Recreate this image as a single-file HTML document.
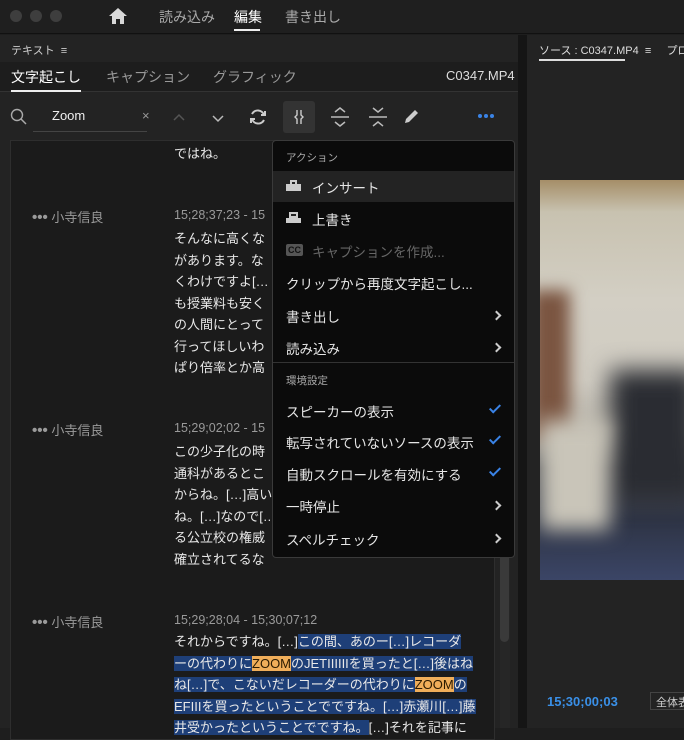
<!DOCTYPE html>
<html><head><meta charset="utf-8"><style>
*{margin:0;padding:0;box-sizing:border-box}
body{width:684px;height:728px;background:#1e1e1e;font-family:"Liberation Sans","Noto Sans CJK JP",sans-serif;color:#ddd;position:relative;overflow:hidden}
.a{position:absolute;white-space:nowrap}
.dot{position:absolute;top:10px;width:12px;height:12px;border-radius:50%;background:#3e3e3e}
.tl{font-size:13px;color:#e8e8e8}
.g{color:#9a9a9a}
.hl{background:#1e3f78}
.zm{background:#f0ae5a;color:#2b1a00}
.mi{position:absolute;left:286px;font-size:13.5px;color:#e6e6e6}
.chev{position:absolute;left:493px;width:7px;height:7px;border-top:2px solid #ccc;border-right:2px solid #ccc;transform:rotate(45deg)}
.chk{position:absolute;left:492px;width:6px;height:11px;border-bottom:2px solid #3a83e6;border-right:2px solid #3a83e6;transform:rotate(45deg)}
</style></head><body>
<div class="a" style="left:0;top:0;width:684px;height:34px;background:#1f1f1f;border-bottom:1px solid #111"></div>
<div class="dot" style="left:10px"></div><div class="dot" style="left:30px"></div><div class="dot" style="left:50px"></div>
<svg class="a" style="left:108px;top:7px" width="20" height="18" viewBox="0 0 20 18"><path d="M10 1L1 9h3v8h4v-5h4v5h4V9h3z" fill="#d8d8d8"/></svg>
<div class="a" style="left:159px;top:7px;font-size:14px;color:#aaa">読み込み</div>
<div class="a" style="left:234px;top:7px;font-size:14px;color:#fff">編集</div>
<div class="a" style="left:234px;top:29px;width:26px;height:2px;background:#eee"></div>
<div class="a" style="left:285px;top:7px;font-size:14px;color:#aaa">書き出し</div>
<div class="a" style="left:0;top:35px;width:518px;height:693px;background:#232323"></div>
<div class="a" style="left:11px;top:42px;font-size:11px;color:#ccc">テキスト&nbsp;&nbsp;≡</div>
<div class="a" style="left:0;top:62px;width:518px;height:30px;background:#1d1d1d;border-bottom:1px solid #333"></div>
<div class="a" style="left:11px;top:67px;font-size:14px;color:#fff">文字起こし</div>
<div class="a" style="left:11px;top:90px;width:70px;height:2px;background:#eee"></div>
<div class="a" style="left:106px;top:67px;font-size:14px;color:#999">キャプション</div>
<div class="a" style="left:213px;top:67px;font-size:14px;color:#999">グラフィック</div>
<div class="a" style="left:446px;top:68px;font-size:13px;color:#ddd">C0347.MP4</div>
<svg class="a" style="left:10px;top:108px" width="18" height="18"><circle cx="7" cy="7" r="5.5" stroke="#aaa" stroke-width="1.4" fill="none"/><path d="M11 11l5 5" stroke="#aaa" stroke-width="1.5"/></svg>
<div class="a" style="left:52px;top:108px;font-size:13px;color:#eee">Zoom</div>
<div class="a" style="left:142px;top:108px;font-size:13px;color:#999">×</div>
<div class="a" style="left:33px;top:131px;width:114px;height:1px;background:#444"></div>
<svg class="a" style="left:170px;top:110px" width="150" height="16"><path d="M4 10l5-5 5 5" stroke="#555" stroke-width="1.5" fill="none"/><path d="M43 6l5 5 5-5" stroke="#bbb" stroke-width="1.5" fill="none"/></svg>
<svg class="a" style="left:248px;top:107px" width="20" height="20" viewBox="0 0 20 20"><path d="M16 8A6.5 6.5 0 0 0 4 7M4 12a6.5 6.5 0 0 0 12 1" stroke="#ccc" stroke-width="2" fill="none"/><path d="M13 8h4V4M7 12H3v4" stroke="#ccc" stroke-width="2" fill="none"/></svg>
<div class="a" style="left:283px;top:101px;width:32px;height:32px;background:#333;border-radius:3px"></div>
<svg class="a" style="left:291px;top:108px" width="16" height="18"><path d="M6 2v5l-2 2 2 2v5M10 2v5l2 2-2 2v5" stroke="#ccc" stroke-width="1.4" fill="none"/></svg>
<svg class="a" style="left:330px;top:106px" width="20" height="22"><path d="M5 6l5-4 5 4M1 11h18M5 16l5 4 5-4" stroke="#bbb" stroke-width="1.5" fill="none"/></svg>
<svg class="a" style="left:368px;top:106px" width="20" height="22"><path d="M5 2l5 4 5-4M1 11h18M5 20l5-4 5 4" stroke="#bbb" stroke-width="1.5" fill="none"/></svg>
<svg class="a" style="left:402px;top:108px" width="18" height="18"><path d="M3 15l1-4 9-9 3 3-9 9z" fill="#ccc"/></svg>
<svg class="a" style="left:477px;top:113px" width="20" height="6"><circle cx="3" cy="3" r="2" fill="#3a83e6"/><circle cx="9" cy="3" r="2" fill="#3a83e6"/><circle cx="15" cy="3" r="2" fill="#3a83e6"/></svg>
<div class="a" style="left:10px;top:140px;width:485px;height:600px;background:#1b1b1b;border:1px solid #2e2e2e"></div>
<div class="a" style="left:500px;top:140px;width:10px;height:588px;background:#262626"></div>
<div class="a" style="left:500px;top:510px;width:9px;height:132px;background:#3a3a3a;border-radius:5px"></div>
<div class="a tl" style="left:174px;top:143px">ではね。</div>
<div class="a g" style="left:32px;top:207px;font-size:13px"><b style="font-size:15px">•••</b>&nbsp;小寺信良</div>
<div class="a g" style="left:174px;top:208px;font-size:12.5px">15;28;37;23 - 15</div>
<div class="a tl" style="left:174px;top:228px;line-height:21.5px">そんなに高くな<br>があります。な<br>くわけですよ[…<br>も授業料も安く<br>の人間にとって<br>行ってほしいわ<br>ぱり倍率とか高</div>
<div class="a g" style="left:32px;top:420px;font-size:13px"><b style="font-size:15px">•••</b>&nbsp;小寺信良</div>
<div class="a g" style="left:174px;top:421px;font-size:12.5px">15;29;02;02 - 15</div>
<div class="a tl" style="left:174px;top:441px;line-height:21.5px">この少子化の時<br>通科があるとこ<br>からね。[…]高い<br>ね。[…]なので[…<br>る公立校の権威<br>確立されてるな</div>
<div class="a g" style="left:32px;top:612px;font-size:13px"><b style="font-size:15px">•••</b>&nbsp;小寺信良</div>
<div class="a g" style="left:174px;top:613px;font-size:12.5px">15;29;28;04 - 15;30;07;12</div>
<div class="a tl" style="left:174px;top:631px;line-height:21.5px">それからですね。[…]<span class="hl">この間、あのー[…]レコーダ</span><br><span class="hl">ーの代わりに<span class="zm">ZOOM</span>のJETIIIIIIを買ったと[…]後はね</span><br><span class="hl">ね[…]で、こないだレコーダーの代わりに<span class="zm">ZOOM</span>の</span><br><span class="hl">EFIIIを買ったということでですね。[…]赤瀬川[…]藤</span><br><span class="hl">井受かったということでですね。</span>[…]それを記事に</div>
<div class="a" style="left:518px;top:35px;width:9px;height:693px;background:#151515"></div>
<div class="a" style="left:527px;top:35px;width:157px;height:693px;background:#232323"></div>
<div class="a" style="left:539px;top:42px;font-size:11px;color:#ddd">ソース : C0347.MP4&nbsp;&nbsp;≡&nbsp;&nbsp;&nbsp;&nbsp;&nbsp;プロ</div>
<div class="a" style="left:539px;top:59px;width:86px;height:2px;background:#ddd"></div>
<div class="a" style="left:540px;top:180px;width:144px;height:400px;overflow:hidden;background:linear-gradient(180deg,#a58e68 0%,#c8c2b0 8%,#d3cfc4 30%,#d0ccc2 50%,#b8b4aa 62%,#4a4b50 72%,#2e3445 85%,#3b4566 100%)">
<div style="position:absolute;left:-10px;top:110px;width:40px;height:150px;background:#7a5440;filter:blur(8px)"></div>
<div style="position:absolute;left:70px;top:190px;width:90px;height:130px;background:#2a2c32;filter:blur(12px)"></div>
<div style="position:absolute;left:0px;top:240px;width:70px;height:110px;background:#c9c5b9;filter:blur(10px)"></div>
</div>
<div class="a" style="left:547px;top:694px;font-size:13px;color:#3a90e8;font-weight:bold">15;30;00;03</div>
<div class="a" style="left:650px;top:692px;width:40px;height:18px;border:1px solid #444;font-size:11px;color:#ccc;padding:1px 5px">全体表示</div>
<div class="a" style="left:272px;top:140px;width:243px;height:418px;background:#0b0b0b;border:1px solid #3a3a3a;border-radius:4px"></div>
<div class="a" style="left:286px;top:150px;font-size:10.5px;color:#aaa">アクション</div>
<div class="a" style="left:273px;top:171px;width:241px;height:31px;background:#232323"></div>
<svg class="a" style="left:286px;top:180px" width="16" height="12"><rect x="0" y="4" width="15" height="7" fill="#ccc"/><rect x="4" y="0" width="7" height="6" fill="#ccc"/><rect x="6" y="2" width="3" height="2" fill="#222"/></svg>
<div class="mi" style="left:312px;top:177px">インサート</div>
<svg class="a" style="left:286px;top:212px" width="16" height="12"><rect x="0" y="6" width="15" height="5" fill="#ccc"/><rect x="3" y="0" width="9" height="7" fill="#ccc"/><rect x="5" y="2" width="5" height="2" fill="#222"/></svg>
<div class="mi" style="left:312px;top:209px">上書き</div>
<div class="a" style="left:286px;top:244px;width:17px;height:12px;background:#555;border-radius:2px;font-size:9px;color:#111;font-weight:bold;text-align:center;line-height:12px">CC</div>
<div class="mi" style="left:312px;top:241px;color:#666">キャプションを作成...</div>
<div class="mi" style="top:273px">クリップから再度文字起こし...</div>
<div class="mi" style="top:306px">書き出し</div><div class="chev" style="top:312px"></div>
<div class="mi" style="top:338px">読み込み</div><div class="chev" style="top:344px"></div>
<div class="a" style="left:273px;top:362px;width:241px;height:1px;background:#333"></div>
<div class="a" style="left:286px;top:373px;font-size:10.5px;color:#aaa">環境設定</div>
<div class="mi" style="top:401px">スピーカーの表示</div><div class="chk" style="top:402px"></div>
<div class="mi" style="top:432px">転写されていないソースの表示</div><div class="chk" style="top:433px"></div>
<div class="mi" style="top:464px">自動スクロールを有効にする</div><div class="chk" style="top:465px"></div>
<div class="mi" style="top:496px">一時停止</div><div class="chev" style="top:502px"></div>
<div class="mi" style="top:529px">スペルチェック</div><div class="chev" style="top:535px"></div>
</body></html>
